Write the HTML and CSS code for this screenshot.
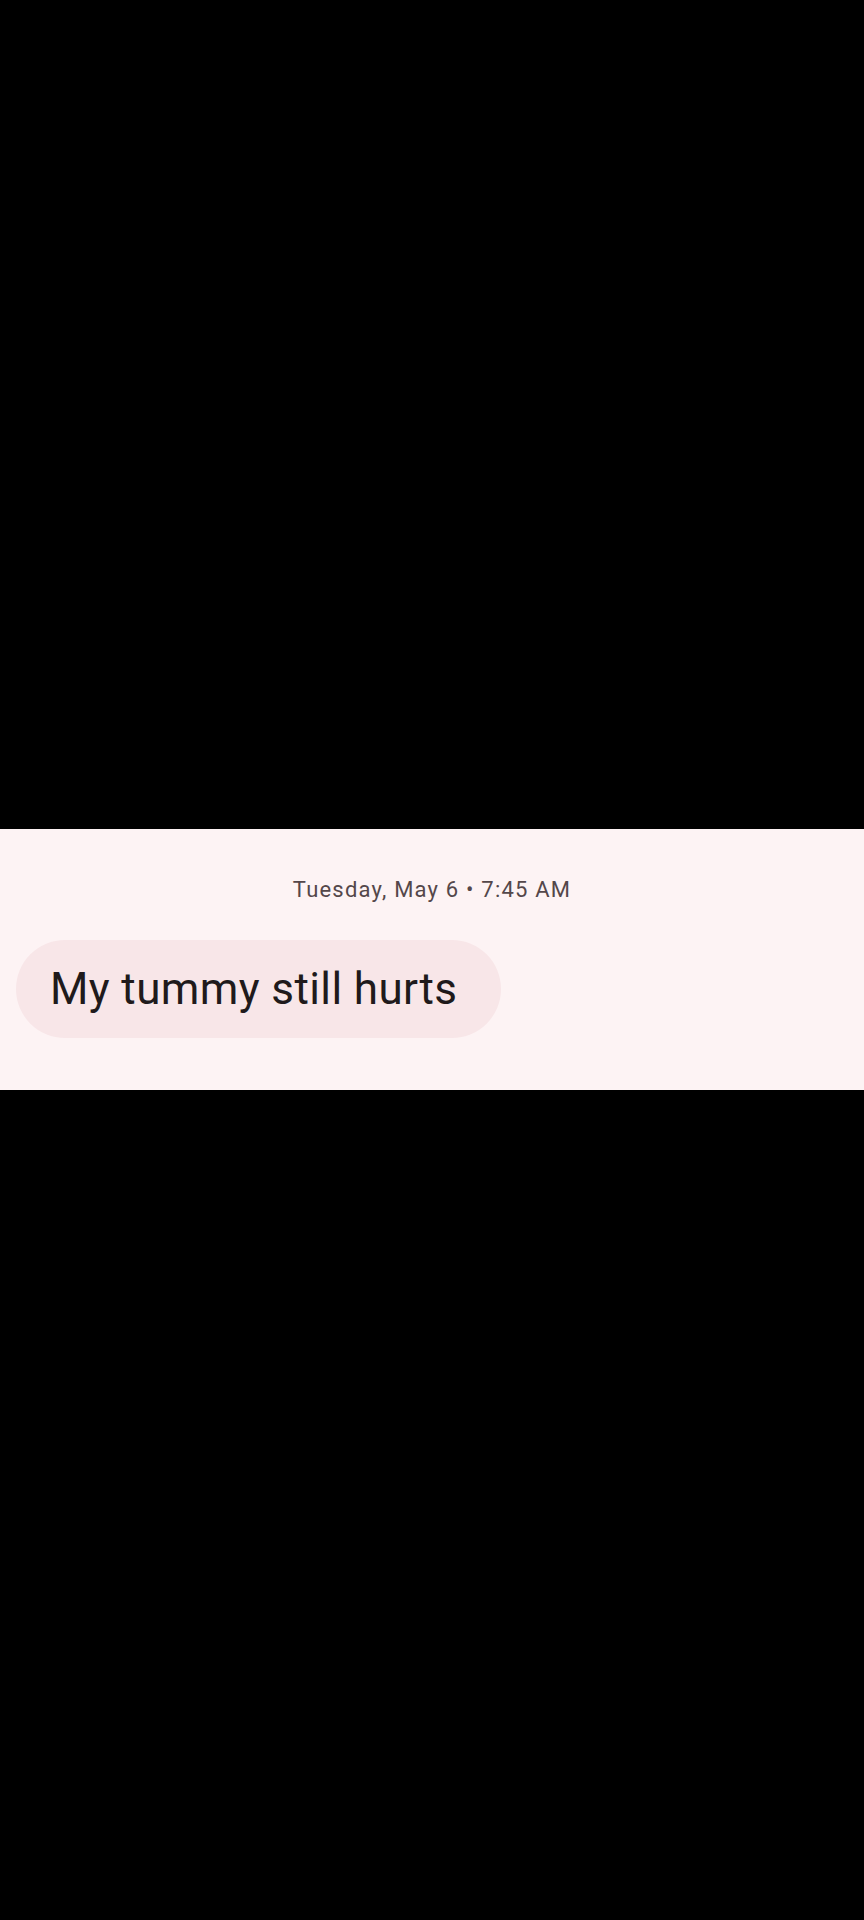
FILE: index.html
```html
<!DOCTYPE html>
<html>
<head>
<meta charset="utf-8">
<link rel="stylesheet" href="styles.css">
</head>
<body>
<div class="screen">
  <div class="black top"></div>
  <section class="chat">
    <div class="stamp">Tuesday, May 6 • 7:45 AM</div>
    <div class="row">
      <div class="bubble">My tummy still hurts</div>
    </div>
  </section>
  <div class="black bottom"></div>
</div>
</body>
</html>
```
FILE: styles.css
```css
html, body {
  margin: 0;
  padding: 0;
  background: #000;
}
.screen {
  width: 864px;
  height: 1920px;
  display: flex;
  flex-direction: column;
  background: #000;
}
.black.top {
  height: 829px;
  flex: none;
}
.chat {
  height: 261px;
  flex: none;
  background: #fdf3f4;
  box-sizing: border-box;
  padding-top: 47px;
  display: flex;
  flex-direction: column;
}
.stamp {
  font-family: Roboto, "Noto Sans", sans-serif;
  font-size: 22px;
  line-height: 28px;
  height: 28px;
  letter-spacing: 1.2px;
  color: #54474a;
  text-align: center;
}
.row {
  display: flex;
  margin-top: 36px;
  padding-left: 16px;
}
.bubble {
  height: 98px;
  box-sizing: border-box;
  display: flex;
  align-items: center;
  padding: 0 44px 0 34px;
  border-radius: 49px;
  background: #f8e6e8;
  font-family: Roboto, "Noto Sans", sans-serif;
  font-size: 44px;
  letter-spacing: 0.4px;
  color: #201a1b;
}
.black.bottom {
  flex: 1;
}
```
